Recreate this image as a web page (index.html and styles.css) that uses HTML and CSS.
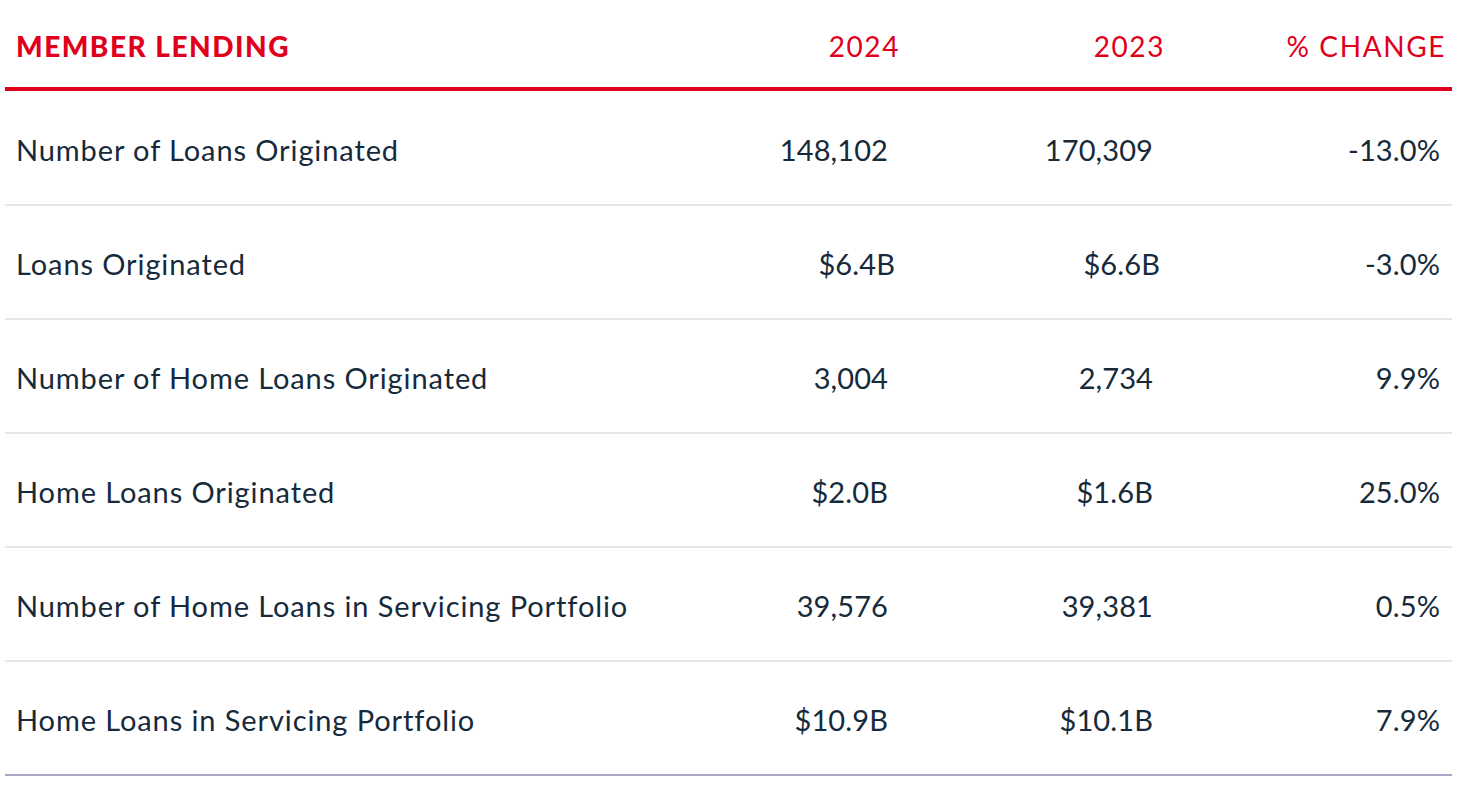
FILE: index.html
```html
<!DOCTYPE html>
<html lang="en">
<head>
<meta charset="utf-8">
<title>Member Lending</title>
<link rel="stylesheet" href="styles.css">
</head>
<body>
<div class="stats">
  <div class="row head">
    <div class="cell label">MEMBER LENDING</div>
    <div class="cell num y1">2024</div>
    <div class="cell num y2">2023</div>
    <div class="cell num pc">% CHANGE</div>
  </div>
  <div class="row">
    <div class="cell label">Number of Loans Originated</div>
    <div class="cell num">148,102</div>
    <div class="cell num">170,309</div>
    <div class="cell num">-13.0%</div>
  </div>
  <div class="row">
    <div class="cell label">Loans Originated</div>
    <div class="cell num shift">$6.4B</div>
    <div class="cell num shift">$6.6B</div>
    <div class="cell num">-3.0%</div>
  </div>
  <div class="row">
    <div class="cell label">Number of Home Loans Originated</div>
    <div class="cell num">3,004</div>
    <div class="cell num">2,734</div>
    <div class="cell num">9.9%</div>
  </div>
  <div class="row">
    <div class="cell label">Home Loans Originated</div>
    <div class="cell num">$2.0B</div>
    <div class="cell num">$1.6B</div>
    <div class="cell num">25.0%</div>
  </div>
  <div class="row">
    <div class="cell label">Number of Home Loans in Servicing Portfolio</div>
    <div class="cell num">39,576</div>
    <div class="cell num">39,381</div>
    <div class="cell num">0.5%</div>
  </div>
  <div class="row last">
    <div class="cell label">Home Loans in Servicing Portfolio</div>
    <div class="cell num">$10.9B</div>
    <div class="cell num">$10.1B</div>
    <div class="cell num">7.9%</div>
  </div>
</div>
</body>
</html>
```
FILE: styles.css
```css
html, body {
  margin: 0;
  padding: 0;
  background: #ffffff;
}

body {
  font-family: Lato, "Noto Sans", "Liberation Sans", sans-serif;
  color: #162a3b;
}

.stats {
  margin: 0 7px 0 5px;
}

.row {
  display: grid;
  grid-template-columns: 1fr 265px 265px 287px;
  align-items: center;
  height: 109px;
  padding-top: 3px;
  border-bottom: 2px solid #e6e6e6;
  font-size: 29px;
  box-sizing: content-box;
}

.row.head {
  height: 83px;
  padding-top: 4px;
  border-bottom: 4px solid #e0001b;
  color: #e0001b;
  font-size: 28px;
}

.row.head + .row {
  height: 109px;
  padding-top: 4px;
}

.row.last {
  border-bottom-color: #a9a6c6;
}

.cell.label {
  padding-left: 11px;
  white-space: nowrap;
  letter-spacing: 0.9px;
}

.head .cell.label {
  font-weight: 900;
  letter-spacing: 1.5px;
}

.cell.num {
  text-align: right;
  padding-right: 12px;
  letter-spacing: 0.1px;
}

.head .cell.num {
  letter-spacing: 1.6px;
}

.head .cell.y1 {
  padding-right: 0;
}

.head .cell.y2 {
  padding-right: 0;
}

.head .cell.pc {
  padding-right: 6px;
}

.cell.shift {
  padding-right: 5px;
}
```
